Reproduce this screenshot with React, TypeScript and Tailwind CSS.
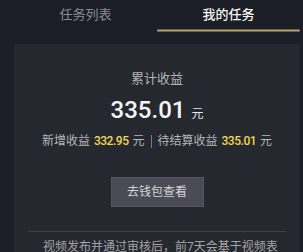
import React from "react";

const FONT = { fontFamily: 'Roboto, "Noto Sans CJK SC", sans-serif' };

export default function App() {
  return (
    <div
      className="h-[252px] w-[303px] overflow-hidden bg-[#1c1e27] text-[#e8e8e8]"
      style={FONT}
    >
      {/* Tabs */}
      <div className="ml-[14px] mr-[3px] flex h-[32px]">
        <div className="flex flex-1 flex-col items-center">
          <span className="mt-[6px] text-[13px] leading-[18px] text-[#8a8c94]">任务列表</span>
        </div>
        <div className="flex flex-1 flex-col items-center">
          <span className="mt-[6px] text-[13px] leading-[18px] font-medium text-[#f4f4f4]">我的任务</span>
          <div className="mt-auto mb-0 h-[3px] w-full rounded-full border-y border-[#6e6246] bg-[#b3a276]" />
        </div>
      </div>

      {/* Card */}
      <div className="ml-[14px] mr-[3px] mt-[12px] bg-[#26282f] px-[14px] pt-[26px] pb-[20px]">
        <div className="text-center text-[13px] leading-[18px] text-[#b3b4b8]">累计收益</div>

        <div className="mt-[8px] flex items-baseline justify-center">
          <span className="text-[24px] leading-[28px] font-medium text-[#f5f5f5]">335.01</span>
          <span className="ml-[6px] text-[12px] leading-[14px] text-[#e6e6e6]">元</span>
        </div>

        <div className="mt-[8px] flex items-center justify-center whitespace-nowrap text-[12px] leading-[18px] text-[#b5b6ba]">
          <span>新增收益</span>
          <span className="ml-[4px] font-medium tracking-[-0.04em] text-[#f2d84c]">332.95</span>
          <span className="ml-[4px]">元</span>
          <span className="mx-[6px] h-[13px] w-px bg-[#7a7b80]" />
          <span>待结算收益</span>
          <span className="ml-[4px] font-medium tracking-[-0.04em] text-[#f2d84c]">335.01</span>
          <span className="ml-[4px]">元</span>
        </div>

        <div className="mt-[27px] flex justify-center">
          <button className="h-[30px] w-[93px] border border-[#55565f] bg-[#4a4b54] text-[12px] text-[#d4d4d8]">
            去钱包查看
          </button>
        </div>

        <div className="mt-[24px] h-px bg-[#3e4048]" />

        <p className="mt-[6px] pl-[15px] text-[12px] leading-[18px] text-[#a3a4a9]">
          视频发布并通过审核后，前7天会基于视频表现持续给予收益奖励，具体以实际结算为准。
        </p>
      </div>
    </div>
  );
}
